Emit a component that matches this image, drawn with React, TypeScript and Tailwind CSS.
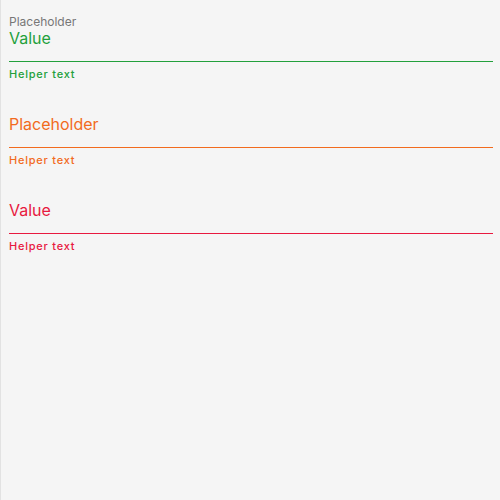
const fields = [
  {
    label: "Placeholder",
    text: "Value",
    textColor: "text-[#23a03c]",
    line: "border-[#23a03c]",
    helper: "text-[#23a03c]",
  },
  {
    label: "",
    text: "Placeholder",
    textColor: "text-[#f26b1d]",
    line: "border-[#f26b1d]",
    helper: "text-[#f26b1d]",
  },
  {
    label: "",
    text: "Value",
    textColor: "text-[#e8193f]",
    line: "border-[#e8193f]",
    helper: "text-[#e8193f]",
  },
];

export default function App() {
  return (
    <div
      className="w-[500px] h-[500px] bg-[#f5f5f5] border-l border-[#e2e2e2] pl-[8px] pr-[7px] pt-[14px]"
      style={{ fontFamily: 'Inter, "Noto Sans", sans-serif' }}
    >
      {fields.map((f, i) => (
        <div key={i} className="mb-[19px]">
          <div className="h-[16px] text-[12px] leading-[16px] text-[#777777]">{f.label}</div>
          <div className={"h-[32px] border-b " + f.line}>
            <div className={"text-[16px] leading-[17px] " + f.textColor}>{f.text}</div>
          </div>
          <div className={"mt-[5px] text-[11px] leading-[14px] font-medium tracking-[0.07em] " + f.helper}>
            Helper text
          </div>
        </div>
      ))}
    </div>
  );
}
